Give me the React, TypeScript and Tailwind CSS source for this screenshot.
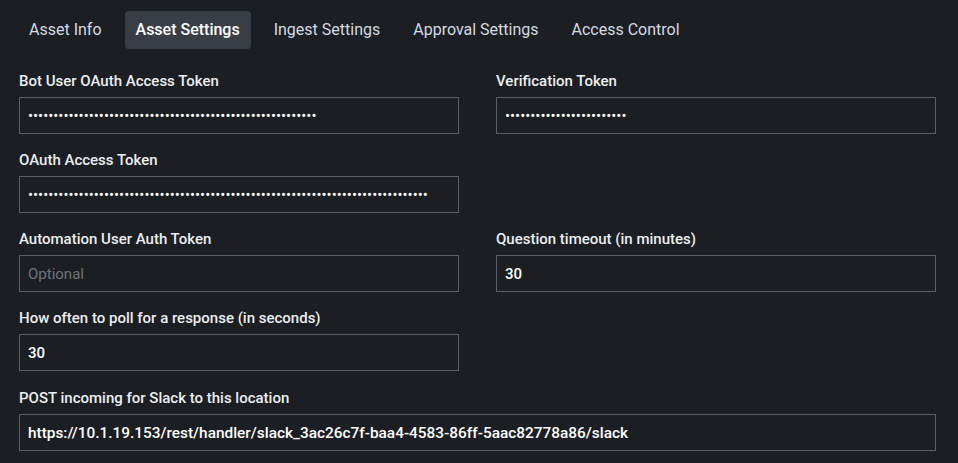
import React from 'react';

const TABS = ['Asset Info', 'Asset Settings', 'Ingest Settings', 'Approval Settings', 'Access Control'];

const Field: React.FC<{
  label: string;
  value?: string;
  placeholder?: string;
  secret?: boolean;
  bold?: boolean;
  wide?: boolean;
}> = ({ label, value, placeholder, secret, bold, wide }) => (
  <div className="flex flex-col">
    <label className="h-5 text-[15px] leading-5 font-medium text-[#eceef1]">{label}</label>
    <input
      type={secret ? 'password' : 'text'}
      readOnly
      value={value ?? ''}
      placeholder={placeholder}
      className={`mt-[6px] h-[37px] w-full border border-[#5b6068] bg-transparent px-2 text-white outline-none placeholder:text-[#6f747c] ${
        bold ? 'font-medium' : ''
      } ${wide ? 'text-[15.4px]' : 'text-[15px]'}`}
    />
  </div>
);

export default function App() {
  return (
    <div
      className="h-[463px] w-[958px] overflow-hidden bg-[#1b1e22] pl-[19px] pr-[22px]"
      style={{ fontFamily: 'Roboto, "Liberation Sans", sans-serif' }}
    >
      {/* Tabs */}
      <div className="flex gap-[13px] pt-[11px]">
        {TABS.map((t) => (
          <div
            key={t}
            className={`flex h-[38px] items-center rounded text-[16px] ${
              t === 'Asset Settings' ? 'bg-[#393e45] px-[11px] font-medium text-white' : 'px-[10px] text-[#d3dae3]'
            }`}
          >
            {t}
          </div>
        ))}
      </div>

      {/* Form */}
      <div className="mt-[22px] grid grid-cols-2 gap-x-[37px] gap-y-[16px]">
        <Field label="Bot User OAuth Access Token" secret value={'x'.repeat(57)} />
        <Field label="Verification Token" secret value={'x'.repeat(24)} />
        <Field label="OAuth Access Token" secret value={'x'.repeat(79)} />
        <div />
        <Field label="Automation User Auth Token" placeholder="Optional" />
        <Field label="Question timeout (in minutes)" value="30" bold />
        <Field label="How often to poll for a response (in seconds)" value="30" bold />
        <div />
        <div className="col-span-2 mt-px">
          <Field
            label="POST incoming for Slack to this location"
            value="https://10.1.19.153/rest/handler/slack_3ac26c7f-baa4-4583-86ff-5aac82778a86/slack"
            bold
            wide
          />
        </div>
      </div>
    </div>
  );
}
